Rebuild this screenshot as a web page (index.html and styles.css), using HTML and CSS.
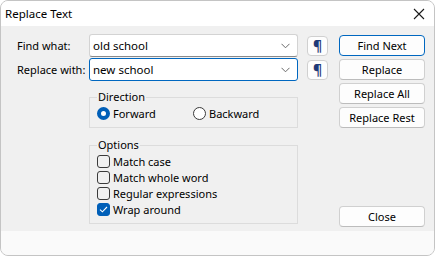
FILE: index.html
```html
<!DOCTYPE html>
<html>
<head>
	<meta charset="UTF-8">
	<title>Replace Text</title>
	<link rel="stylesheet" href="styles.css">
</head>
<body>
	<div class="win">
	<!-- title bar -->
		<div class="title">
			<span>Replace Text</span>
			<svg class="close-x" width="12" height="12" viewBox="0 0 12 12"><path d="M1 1L11 11M11 1L1 11" stroke="#1a1a1a" stroke-width="1.1" fill="none"/></svg>
		</div>
		<div class="content">
			<div class="form">
				<div class="row">
					<label>Find what:</label>
					<div class="combo"><span>old school</span><svg width="9" height="6" viewBox="0 0 9 6"><path d="M0.5 0.8L4.5 4.8L8.5 0.8" stroke="#6a6a6a" fill="none"/></svg></div>
					<div class="pil">¶</div>
				</div>
				<div class="row">
					<label>Replace with:</label>
					<div class="combo focus"><span>new school</span><svg width="9" height="6" viewBox="0 0 9 6"><path d="M0.5 0.8L4.5 4.8L8.5 0.8" stroke="#6a6a6a" fill="none"/></svg></div>
					<div class="pil">¶</div>
				</div>
				<fieldset class="dir">
					<legend>Direction</legend>
					<div class="radios">
						<div class="opt"><i class="radio on"></i>Forward</div>
						<div class="opt"><i class="radio"></i>Backward</div>
					</div>
				</fieldset>
				<fieldset class="opts">
					<legend>Options</legend>
					<div class="opt"><i class="check"></i>Match case</div>
					<div class="opt"><i class="check"></i>Match whole word</div>
					<div class="opt"><i class="check"></i>Regular expressions</div>
					<div class="opt"><i class="check on"><svg width="9" height="7" viewBox="0 0 9 7"><path d="M1 3.6L3.4 5.8L8 1" stroke="#fff" stroke-width="1.1" fill="none"/></svg></i>Wrap around</div>
				</fieldset>
			</div>
			<div class="btns">
				<div class="btn def">Find Next</div>
				<div class="btn">Replace</div>
				<div class="btn">Replace All</div>
				<div class="btn">Replace Rest</div>
				<div class="btn last">Close</div>
			</div>
		</div>
		<div class="foot"></div>
	</div>
</body>
</html>
```

FILE: styles.css
```css
body{margin:0;padding:0;background:#fff;}
.win{width:435px;height:256px;box-sizing:border-box;border:1px solid #c4c4c4;border-radius:8px;overflow:hidden;display:flex;flex-direction:column;background:#f0f0f0;font-family:"Noto Sans",sans-serif;font-size:11px;color:#000;}
.title{height:25px;background:#fff;display:flex;align-items:center;justify-content:space-between;padding:0 9px 0 4px;flex:none;font-size:11.5px;}
.close-x{display:block;}
.content{flex:1;display:flex;padding:8px 0 4px 16px;}
.form{width:312px;}
.row{display:flex;align-items:center;height:23px;margin-bottom:1px;}
.row label{width:72px;white-space:nowrap;}
.combo{width:209px;height:23px;box-sizing:border-box;background:#fff;border:1px solid #d3d3d3;border-bottom-color:#8a8a8a;border-radius:3px;display:flex;align-items:center;justify-content:space-between;padding:0 7px 0 3px;font-size:11.5px;}
.combo.focus{border-color:#0067c0;}
.pil{width:21px;height:20px;box-sizing:border-box;margin-left:9px;background:#fdfdfd;border:1px solid #d0d0d0;border-radius:4px;display:flex;align-items:center;justify-content:center;color:#1e3a78;font-size:14px;font-weight:bold;}
fieldset{margin:0 0 0 72px;width:209px;box-sizing:border-box;border:1px solid #dcdcdc;padding:0 7px;}
legend{padding:0 1px;line-height:16px;}
.dir{margin-top:8px;padding-bottom:6px;}
.opts{margin-top:9px;padding-bottom:6px;}
.radios{display:flex;}
.radios .opt{width:96px;}
.opt{display:flex;align-items:center;height:16px;white-space:nowrap;}
.radio{width:13px;height:13px;box-sizing:border-box;border:1px solid #3a3a3a;border-radius:50%;margin-right:3px;background:#fff;}
.radio.on{border:4px solid #005fb8;}
.check{width:13px;height:13px;box-sizing:border-box;border:1px solid #3a3a3a;border-radius:3px;margin-right:3px;display:flex;align-items:center;justify-content:center;}
.check.on{background:#005fb8;border-color:#005fb8;}
.btns{width:86px;margin-left:10px;display:flex;flex-direction:column;padding-top:1px;}
.btn{height:21px;box-sizing:border-box;background:#fdfdfd;border:1px solid #d0d0d0;border-bottom-color:#bcbcbc;border-radius:4px;display:flex;align-items:center;justify-content:center;margin-bottom:3px;}
.btn.def{border-color:#0067c0;}
.btn.last{margin-top:auto;margin-bottom:0;}
.foot{height:24px;background:#fafafa;flex:none;}
```
